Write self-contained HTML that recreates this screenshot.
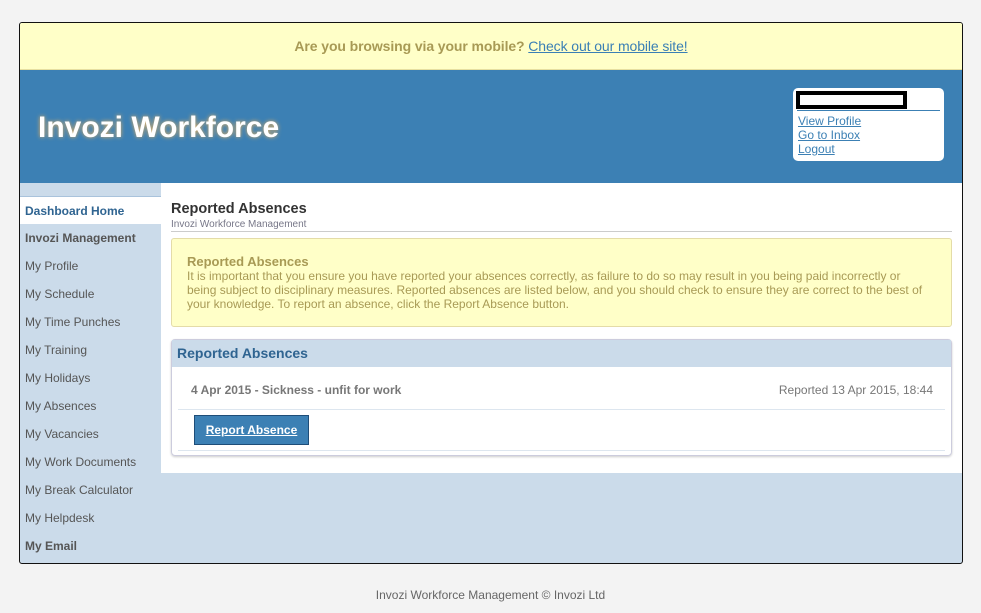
<!DOCTYPE html>
<html><head><style>
*{box-sizing:border-box;margin:0;padding:0}
body{width:981px;height:613px;background:#f3f3f3;font-family:"Liberation Sans",sans-serif;position:relative;overflow:hidden}
.wrap{position:absolute;left:19px;top:22px;width:944px;height:542px;border:1px solid #111;border-radius:3px;background:#cbdbea;overflow:hidden}
.mob{height:47px;background:#ffffc8;border-bottom:1px solid #e6dfa0;text-align:center;font-size:14px;font-weight:bold;color:#a89a55;line-height:47px;letter-spacing:-0.1px}
.mob a{color:#3a7fb5;font-weight:normal}
.hdr{position:absolute;top:47px;left:0;width:942px;height:113px;background:#3c80b4}
.hdr h1{position:absolute;left:18px;top:41px;font-size:30px;color:#fff;text-shadow:0 0 4px #e8b060}
.box{position:absolute;left:773px;top:18px;width:151px;height:73px;background:#fff;border-radius:5px;padding:3px 4px;font-size:12px;line-height:14px}
.box .n{width:111px;height:18px;border:4px solid #000;margin-left:-1px}
.box hr{border:0;border-top:1px solid #3c80b4;margin:1px 0 3px}
.box a{color:#3c80b4;display:block;padding-left:1px}
.side{position:absolute;left:0;top:173px;width:141px}
.side div{height:28px;line-height:28px;padding-left:5px;font-size:12px;color:#555}
.side .a{background:#fff;color:#2f6491;font-weight:bold;border-top:1px solid #a9c3dc}
.side .b{font-weight:bold}
.main{position:absolute;left:141px;top:160px;width:801px;height:290px;background:#fff}
.t{position:absolute;left:10px;top:18px;font-size:14.5px;font-weight:bold;color:#333}
.st{position:absolute;left:10px;top:36px;width:781px;font-size:10px;color:#778;border-bottom:1px solid #ccc;padding-bottom:1px}
.note{position:absolute;left:10px;top:55px;width:781px;height:89px;background:#ffffc8;border:1px solid #e4dca8;border-radius:3px;padding:16px 28px 0 15px;color:#a89a55;font-size:12px;line-height:14px}
.note b{font-size:13px;display:block}
.panel{position:absolute;left:10px;top:156px;width:781px;height:117px;border:1px solid #ccd;border-radius:4px;box-shadow:0 1px 2px #ccc}
.ph{height:27px;background:#cbdbea;color:#2f6491;font-weight:bold;font-size:14px;line-height:27px;padding-left:5px}
.row{margin:0 6px;height:43px;border-bottom:1px solid #dde6ef;line-height:46px;font-size:12px;font-weight:bold;color:#777;padding-left:13px}
.row span{float:right;font-weight:normal;padding-right:12px}
.btn{position:absolute;left:22px;top:75px;width:115px;height:30px;background:#3c80b4;border:1px solid #1e4d78;color:#fff;font-weight:bold;font-size:12px;text-decoration:underline;text-align:center;line-height:28px}
.pl{position:absolute;left:6px;right:6px;top:110px;border-top:1px solid #dde6ef}
.foot{position:absolute;top:588px;width:981px;text-align:center;font-size:12px;color:#666}
</style></head><body>
<div class="wrap">
<div class="mob">Are you browsing via your mobile? <a href="#">Check out our mobile site!</a></div>
<div class="hdr"><h1>Invozi Workforce</h1>
<div class="box"><div class="n"></div><hr><a href="#">View Profile</a><a href="#">Go to Inbox</a><a href="#">Logout</a></div></div>
<div class="side">
<div class="a">Dashboard Home</div><div class="b">Invozi Management</div><div>My Profile</div><div>My Schedule</div><div>My Time Punches</div><div>My Training</div><div>My Holidays</div><div>My Absences</div><div>My Vacancies</div><div>My Work Documents</div><div>My Break Calculator</div><div>My Helpdesk</div><div class="b">My Email</div>
</div>
<div class="main">
<div class="t">Reported Absences</div>
<div class="st">Invozi Workforce Management</div>
<div class="note"><b>Reported Absences</b>It is important that you ensure you have reported your absences correctly, as failure to do so may result in you being paid incorrectly or being subject to disciplinary measures. Reported absences are listed below, and you should check to ensure they are correct to the best of your knowledge. To report an absence, click the Report Absence button.</div>
<div class="panel"><div class="ph">Reported Absences</div>
<div class="row">4 Apr 2015 - Sickness - unfit for work<span>Reported 13 Apr 2015, 18:44</span></div>
<div class="btn">Report Absence</div><div class="pl"></div></div>
</div>
</div>
<div class="foot">Invozi Workforce Management © Invozi Ltd</div>
</body></html>
